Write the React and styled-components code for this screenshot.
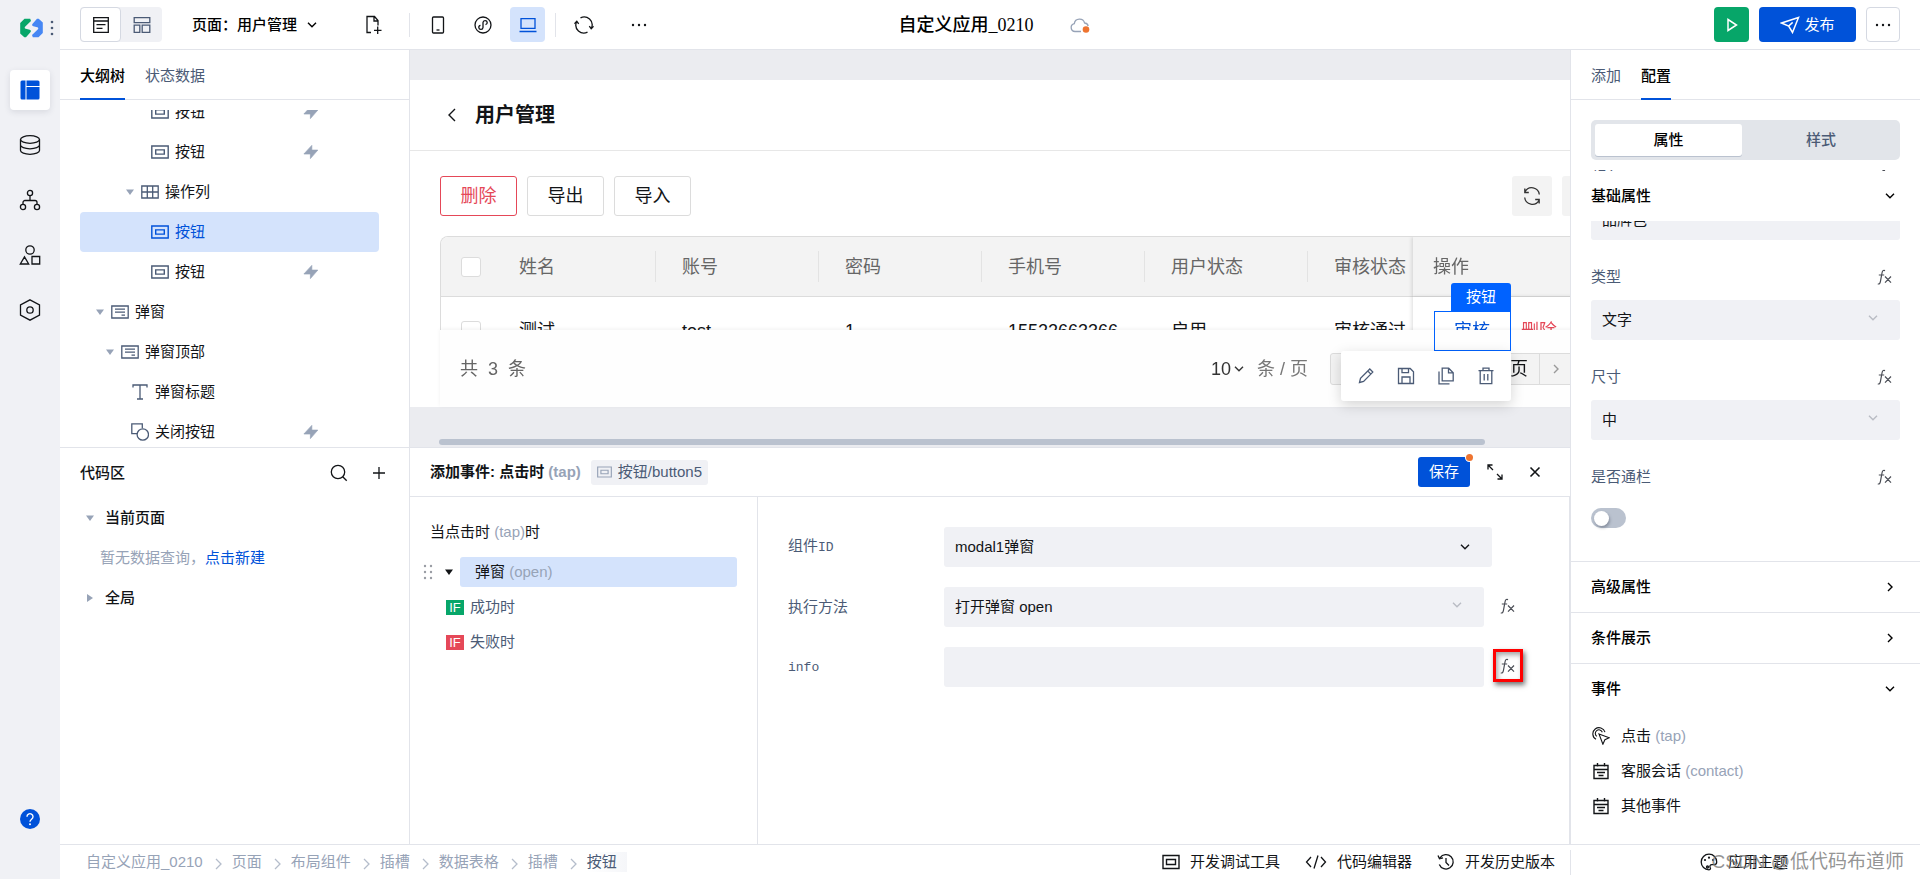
import React, { useLayoutEffect, useRef } from 'react';
import styled, { createGlobalStyle, css } from 'styled-components';

const c = {
  blue: '#0052d9',
  pale: '#d4e3fc',
  ink: '#121417',
  slate: '#4b5b76',
  mute: '#97a3b7',
  line: '#e2e4ea',
  fill: '#f0f1f5',
  red: '#e54858',
  green: '#07a669',
};

const Global = createGlobalStyle`
  *, *::before, *::after { box-sizing: border-box; }
  body {
    margin: 0;
    font: 15px/20px "Liberation Sans", "Noto Sans CJK SC", sans-serif;
    color: ${c.ink};
    background: #fff;
  }
  button, input, select { font: inherit; color: inherit; margin: 0; }
  button { border: 0; padding: 0; background: none; cursor: pointer; }
  h1, h2, h3, p, ul, ol { margin: 0; padding: 0; font: inherit; list-style: none; }
  a { color: inherit; text-decoration: none; }
  svg { display: block; flex: none; }
`;

/* ---------- icons ---------- */

const Icon = ({ w = 18, h = w, box, sw = 1.3, children, ...rest }) => (
  <svg
    width={w}
    height={h}
    viewBox={box || `0 0 ${w} ${h}`}
    fill="none"
    stroke="currentColor"
    strokeWidth={sw}
    aria-hidden="true"
    {...rest}
  >
    {children}
  </svg>
);

const leaf = 'M1.2 5L5.500.7h5.700L12 3 6.300 8.400c-1 1-.7 2 .5 2.300l3.900 1c1.300.4 1.600 1.500.7 2.500L7 19.300H5.300L1.200 15.500z';
const LogoIcon = () => (
  <Icon w={24} h={20} stroke="none">
    <path d={leaf} fill="#07a669" />
    <path d={leaf} fill="#4687f4" transform="rotate(180 12.500 10)" />
  </Icon>
);
const DotsV = () => (
  <Icon w={4} h={16} stroke="none">
    <g fill={c.slate}><circle cx="2" cy="2" r="1.300" /><circle cx="2" cy="8" r="1.300" /><circle cx="2" cy="14" r="1.300" /></g>
  </Icon>
);
const DotsH = () => (
  <Icon w={18} h={4} stroke="none">
    <g fill={c.ink}><circle cx="3" cy="2" r="1.200" /><circle cx="9" cy="2" r="1.200" /><circle cx="15" cy="2" r="1.200" /></g>
  </Icon>
);
const LayoutIcon = () => (
  <Icon w={20} stroke="none" fill="currentColor">
    <path d="M2 .5h3.500v19H2A1.500 1.500 0 0 1 .5 18V2A1.500 1.500 0 0 1 2 .5zM6.500.5H18A1.500 1.500 0 0 1 19.500 2v4h-13zM6.500 7h13v11a1.500 1.500 0 0 1-1.500 1.500H6.500z" />
  </Icon>
);
const DatabaseIcon = () => (
  <Icon w={22}>
    <ellipse cx="11" cy="5.500" rx="9.500" ry="3.800" />
    <path d="M1.500 5.500v11c0 2.100 4.200 3.800 9.500 3.800s9.500-1.700 9.500-3.800v-11M1.500 11c0 2.100 4.200 3.800 9.500 3.800s9.500-1.700 9.500-3.800" />
  </Icon>
);
const FlowIcon = () => (
  <Icon w={22}>
    <circle cx="11" cy="4" r="2.600" /><circle cx="4" cy="18" r="2.600" /><circle cx="18" cy="18" r="2.600" />
    <path d="M11 6.600v4.900M4 15.400v-1.900a2 2 0 0 1 2-2h10a2 2 0 0 1 2 2v1.900" />
  </Icon>
);
const ShapesIcon = () => (
  <Icon w={22}>
    <circle cx="11" cy="6" r="4.200" /><path d="M5.500 12.800L9.700 20H1.300zM13 12.500h7.700V20H13z" />
  </Icon>
);
const HexIcon = () => (
  <Icon w={22}>
    <path d="M11 .8l9.500 5v10.400l-9.500 5-9.500-5V5.800z" /><circle cx="11" cy="11" r="3.200" />
  </Icon>
);
const HelpIcon = () => (
  <Icon w={20} sw={1.400}>
    <circle cx="10" cy="10" r="10" fill={c.blue} stroke="none" />
    <path d="M7 7.700a3 3 0 1 1 4.600 2.500c-1 .7-1.600 1.200-1.600 2.500" stroke="#fff" />
    <circle cx="10" cy="15.200" r="1" fill="#fff" stroke="none" />
  </Icon>
);
const DocListIcon = () => (
  <Icon w={18}><path d="M1.700 1.700h14.600v14.600H1.700zM1.700 5h14.600M4.500 8.700h9M4.500 12.300h6" /></Icon>
);
const BlocksIcon = () => (
  <Icon w={18}><path d="M1.200 1.700h15.600v5H1.200zM1.200 9.200h5.600v7.100H1.200zM9.200 9.200h7.600v7.100H9.200z" /></Icon>
);
const FileAddIcon = () => (
  <Icon w={18} h={20}><path d="M6 17.500H2v-16h7.500l3.500 4v5M9 1.500V6h4M12.700 11.500v7.500M9 15.300h7.500" /></Icon>
);
const PhoneIcon = () => (
  <Icon w={18}><rect x="3.500" y="1" width="11" height="16" rx="1" /><path d="M7.500 14h3" /></Icon>
);
const MiniIcon = () => (
  <Icon w={18}>
    <circle cx="9" cy="9" r="8" />
    <path d="M9 11.500a2.100 2.100 0 1 1-2.500-2.200M9 11.500v-5a2.100 2.100 0 1 1 2.500 2.200" />
  </Icon>
);
const DesktopIcon = () => (
  <Icon w={18}><path d="M2 2.700h14v9.600H2zM.5 15.500h17" /></Icon>
);
const CycleIcon = () => (
  <Icon w={20}>
    <path d="M6.500 2.800A8 8 0 0 1 17.500 13M13.500 17.200A8 8 0 0 1 2.500 7" />
    <path d="M19.500 11.300l-2.300 2.400-1.900-2.600M.5 8.700l2.300-2.400 1.900 2.600" />
  </Icon>
);
const CloudIcon = () => (
  <Icon w={20} h={16} stroke={c.mute}>
    <path d="M11 14.500H5a4 4 0 0 1-.7-7.900A5.300 5.300 0 0 1 14.600 6a4 4 0 0 1 3.600 3" />
    <circle cx="16" cy="12.500" r="3.300" fill="#ee7430" stroke="none" />
  </Icon>
);
const PlayIcon = () => (
  <Icon w={14} h={16} sw={1.500}><path d="M3 2.500v11L11.500 8z" /></Icon>
);
const SendIcon = () => (
  <Icon w={20} h={18} sw={1.500}><path d="M1.500 7L18.500 1.500l-6 15L8.700 10zM8.700 10l4-3.600" /></Icon>
);
const ArrowDown = () => (
  <Icon w={10} h={6} sw={1.400}><path d="M1 .8l4 4 4-4" /></Icon>
);
const ArrowRight = () => (
  <Icon w={6} h={10} sw={1.400}><path d="M1 1l4 4-4 4" /></Icon>
);
const ArrowBack = () => (
  <Icon w={8} h={14} sw={1.400}><path d="M7 1L1 7l6 6" /></Icon>
);
const CrumbArrow = () => (
  <Icon w={8} h={12}><path d="M1 1l5 5-5 5" /></Icon>
);
const Caret = ({ right }) => (
  <Icon w={8} h={8} stroke="none" fill="currentColor">
    <path d={right ? 'M1 0l6 4-6 4z' : 'M0 1.500h8L4 7z'} />
  </Icon>
);
const BoltIcon = () => (
  <Icon w={16} h={14} stroke={c.mute} fill={c.mute} sw={0.700} strokeLinejoin="round">
    <path d="M8.800.4v4.700h6L7.400 13.600V9H.9z" />
  </Icon>
);
const ButtonIcon = ({ w = 18 }) => (
  <Icon w={w} h={14} box="0 0 18 14" sw={1.400}>
    <path d="M.8 1h16.400v12H.8z" /><path d="M4.700 4.900h8.600v4.200H4.700z" />
  </Icon>
);
const GridIcon = () => (
  <Icon w={18} h={14}><path d="M.8 1h16.400v12H.8zM.8 7h16.400M6.300 1v12M11.700 1v12" /></Icon>
);
const ModalIcon = () => (
  <Icon w={18} h={14}><path d="M.8 1h16.400v12H.8zM4 4.200h10M4 7.200h10M10.500 10.200H14" /></Icon>
);
const TextIcon = () => (
  <Icon w={18}><path d="M2 4.500V2h14v2.500M9 2v14M6 16h6" /></Icon>
);
const SlotIcon = () => (
  <Icon w={18}><path d="M6.500 10.700H.8V.8h10.500v4.500" /><circle cx="11.800" cy="11.500" r="5.700" /></Icon>
);
const SearchIcon = () => (
  <Icon w={18}><circle cx="8" cy="8" r="6.700" /><path d="M12.700 12.700l4 4" /></Icon>
);
const PlusIcon = () => <Icon w={14}><path d="M7 1v12M1 7h12" /></Icon>;
const ReloadIcon = () => (
  <Icon w={18}>
    <path d="M2 4.800A7.600 7.600 0 0 1 16.300 7.500M16 13.200A7.600 7.600 0 0 1 1.700 10.500M1.800 1.500v4h4M16.200 16.500v-4h-4" />
  </Icon>
);
const PencilIcon = () => (
  <Icon w={18}><path d="M2.500 15.500l1-4.200L12.800 2l3 3.100-9.200 9.300zM10.800 4l3.100 3.100" /></Icon>
);
const SaveIcon = () => (
  <Icon w={18}><path d="M1.500 1.500h11.700l3.300 3.300v11.700h-15zM5 1.500v4.200h6.500V1.500M5 16.500V10h8v6.500" /></Icon>
);
const CopyIcon = () => (
  <Icon w={18}><path d="M5.200 1.200h6.500l4.500 4.500v8.100h-11zM11.500 1.200v4.700h4.700M2 4.500v12.300h10.500" /></Icon>
);
const TrashIcon = () => (
  <Icon w={18}><path d="M1.500 3.700h15M6 3.500V1.200h6v2.300M3.200 3.700v13h11.600v-13M7.200 7v6.500M10.800 7v6.500" /></Icon>
);
const ExpandIcon = () => (
  <Icon w={16}><path d="M1 5.500V1h4.500M1 1l5 5M15 10.500V15h-4.500M15 15l-5-5" /></Icon>
);
const CloseIcon = () => <Icon w={12} sw={1.600}><path d="M1.500 1.500l9 9M10.500 1.500l-9 9" /></Icon>;
const DragIcon = () => (
  <Icon w={10} h={16} stroke="none" fill="#999ca3">
    {[2, 8, 14].map((y) => (
      <g key={y}><circle cx="2" cy={y} r="1.200" /><circle cx="8" cy={y} r="1.200" /></g>
    ))}
  </Icon>
);
const FxIcon = () => (
  <Icon w={16} stroke="#4a4d55" sw={1.200}>
    <path d="M8 1.600C6.300.7 5.400 1.700 5 4L3.400 12.600C3 14.600 2 15.400.8 14.800M1.800 6h5.400M8 7.500l6 6.200M14 7.500l-6 6.200" />
  </Icon>
);
const TapIcon = () => (
  <Icon w={18} sw={1.100}>
    <path d="M4.900 9.400A3.600 3.600 0 1 1 10.300 5.200M4 12.300A6.200 6.200 0 1 1 13 5.200" />
    <path d="M7 7l10.200 3.700-4.300 2-2 4.500z" />
  </Icon>
);
const EventIcon = () => (
  <Icon w={18} sw={1.400}><path d="M2 3.500h14v13H2zM2 7.500h14M5.500 1v3.500M12.500 1v3.500M5 10.500h8M6.500 13.500h5" /></Icon>
);
const CodeIcon = () => (
  <Icon w={22} h={16}><path d="M6 3L1.500 8 6 13M16 3l4.500 5-4.500 5M13 1.500l-4 13" /></Icon>
);
const HistoryIcon = () => (
  <Icon w={18}><path d="M3 4.800A7.200 7.200 0 1 1 2.300 11.500M1 2.500l1.500 3.300 3.500-1M9 5v4.500l3 3" /></Icon>
);
const DebugIcon = () => (
  <Icon w={18} h={16} sw={1.400}><path d="M1 1.500h16v13H1zM4.500 5.500h9v5h-9z" /></Icon>
);
const PaletteIcon = () => (
  <Icon w={18}>
    <path d="M9 1.200a7.700 7.700 0 1 0 0 15.600c1.500 0 1.800-1.200 1.200-2.200-.8-1.500 0-3 1.700-3h2.300c1.600 0 2.500-1.200 2.500-2.600C16.700 4.600 13.500 1.200 9 1.200z" />
    <g fill="currentColor" stroke="none"><circle cx="5" cy="7" r="1.100" /><circle cx="9" cy="4.700" r="1.100" /><circle cx="13" cy="7" r="1.100" /></g>
    <circle cx="7.500" cy="14" r="1" />
  </Icon>
);

/* ---------- shell ---------- */

const Shell = styled.div`
  display: grid;
  grid-template-columns: 60px minmax(0, 1fr);
  grid-template-rows: minmax(0, 1fr);
  height: 100vh;
`;
const Rail = styled.nav`
  display: flex;
  flex-direction: column;
  align-items: center;
  background: ${c.fill};
  padding-bottom: 50px;
`;
const Brand = styled.a`
  display: flex;
  align-items: center;
  justify-content: flex-end;
  gap: 7px;
  width: 100%;
  height: 55px;
  padding-right: 6px;
`;
const RailList = styled.div`
  display: flex;
  flex-direction: column;
  gap: 15px;
  margin-top: 15px;
  flex: 1;
`;
const RailButton = styled.button`
  display: grid;
  place-items: center;
  width: 40px;
  height: 40px;
  border-radius: 4px;
  ${(p) => p.$active && css`
    color: ${c.blue};
    background: #fff;
    box-shadow: 0 2px 6px rgba(40, 50, 70, 0.12);
  `}
`;
const Column = styled.div`
  display: grid;
  grid-template-rows: 50px minmax(0, 1fr) 35px;
  min-width: 0;
`;

/* ---------- top bar ---------- */

const TopBar = styled.header`
  display: grid;
  grid-template-columns: 1fr auto 1fr;
  align-items: center;
  padding: 0 20px;
  border-bottom: 1px solid ${c.line};
`;
const BarGroup = styled.div`
  display: flex;
  align-items: center;
  gap: 10px;
  justify-content: ${(p) => (p.$end ? 'flex-end' : 'flex-start')};
`;
const ViewSwitch = styled.div`
  display: flex;
  border-radius: 4px;
  background: ${c.fill};
`;
const ViewButton = styled.button`
  display: grid;
  place-items: center;
  width: 41px;
  height: 35px;
  border-radius: 4px;
  color: ${c.slate};
  ${(p) => p.$active && css`
    color: ${c.ink};
    background: #fff;
    border: 1px solid #d5d9e2;
  `}
`;
const PagePicker = styled.button`
  display: flex;
  align-items: center;
  gap: 10px;
  margin: 0 29px 0 20px;
  font-weight: 500;
  color: #000;
`;
const ToolButton = styled.button`
  display: grid;
  place-items: center;
  width: 35px;
  height: 35px;
  border-radius: 4px;
  ${(p) => p.$active && css`
    color: ${c.blue};
    background: ${c.pale};
  `}
`;
const BarRule = styled.span`
  width: 1px;
  height: 24px;
  margin-left: ${(p) => (p.$spaced ? 8 : 0)}px;
  background: ${c.line};
`;
const TrailingTools = styled.div`
  display: flex;
  gap: 20px;
`;
const AppTitle = styled.div`
  display: flex;
  align-items: center;
  gap: 36px;
  padding-left: 8px;
`;
const AppName = styled.h1`
  font: 500 18px/20px "Liberation Serif", "Noto Sans CJK SC", serif;
  color: #000;
`;
const RunButton = styled.button`
  display: grid;
  place-items: center;
  width: 35px;
  height: 35px;
  border-radius: 4px;
  color: #fff;
  background: ${c.green};
`;
const PublishButton = styled.button`
  display: flex;
  align-items: center;
  justify-content: center;
  gap: 4px;
  width: 97px;
  height: 35px;
  border-radius: 4px;
  color: #fff;
  background: ${c.blue};
`;
const MoreButton = styled.button`
  display: grid;
  place-items: center;
  width: 34px;
  height: 35px;
  border: 1px solid #d5d9e2;
  border-radius: 4px;
`;

/* ---------- workspace ---------- */

const Workspace = styled.div`
  display: grid;
  grid-template-columns: 350px minmax(0, 1fr) 350px;
  grid-template-rows: minmax(0, 1fr);
  min-height: 0;
`;
const SplitColumn = styled.div`
  display: grid;
  grid-template-rows: minmax(0, 1fr) minmax(0, 1fr);
  min-width: 0;
  min-height: 0;
  border-right: ${(p) => (p.$ruled ? `1px solid ${c.line}` : '0')};
`;
const Pane = styled.section`
  display: flex;
  flex-direction: column;
  min-height: 0;
  min-width: 0;
  background: #fff;
  border-top: ${(p) => (p.$lower ? `1px solid ${c.line}` : '0')};
`;
const Tabs = styled.div`
  display: flex;
  flex: none;
  gap: 20px;
  height: 50px;
  padding: 0 20px;
  border-bottom: 1px solid ${c.line};
`;
const Tab = styled.button`
  height: 50px;
  padding-top: 3px;
  color: ${(p) => (p.$active ? '#000' : c.slate)};
  font-weight: ${(p) => (p.$active ? 500 : 400)};
  border-bottom: 2px solid ${(p) => (p.$active ? c.blue : 'transparent')};
`;

/* ---------- outline tree ---------- */

const TreeScroll = styled.div`
  flex: 1;
  min-height: 0;
  margin-top: 10px;
  padding: 0 30px 0 20px;
  overflow-y: auto;
  scrollbar-width: none;
`;
const TreeRow = styled.li`
  display: flex;
  align-items: center;
  height: 40px;
  padding: 0 60px 0 ${(p) => 13 + p.$level * 10}px;
  border-radius: 4px;
  color: ${(p) => (p.$active ? c.blue : c.ink)};
  background: ${(p) => (p.$active ? c.pale : 'transparent')};
`;
const TreeCaret = styled.span`
  display: grid;
  place-items: center;
  width: 14px;
  margin-right: 4px;
  color: ${c.mute};
`;
const TreeIcon = styled.span`
  width: 18px;
  margin-right: 6px;
  color: ${(p) => (p.$active ? c.blue : c.slate)};
`;
const TreeLabel = styled.span`
  flex: 1;
`;

const tree = [
  [4, ButtonIcon, '按钮', { bolt: true }],
  [4, ButtonIcon, '按钮', { bolt: true }],
  [3, GridIcon, '操作列', { open: true }],
  [4, ButtonIcon, '按钮', { active: true }],
  [4, ButtonIcon, '按钮', { bolt: true }],
  [0, ModalIcon, '弹窗', { open: true }],
  [1, ModalIcon, '弹窗顶部', { open: true }],
  [2, TextIcon, '弹窗标题', {}],
  [2, SlotIcon, '关闭按钮', { bolt: true }],
];

function useScrolled(top) {
  const ref = useRef(null);
  useLayoutEffect(() => {
    ref.current.scrollTop = top;
  }, [top]);
  return ref;
}

function Outline() {
  const ref = useScrolled(18);
  return (
    <Pane>
      <Tabs>
        <Tab $active>大纲树</Tab>
        <Tab>状态数据</Tab>
      </Tabs>
      <TreeScroll ref={ref}>
        <ul>
          {tree.map(([level, Glyph, name, o], i) => (
            <TreeRow key={i} $level={level} $active={o.active}>
              <TreeCaret>{o.open && <Caret />}</TreeCaret>
              <TreeIcon $active={o.active}><Glyph /></TreeIcon>
              <TreeLabel>{name}</TreeLabel>
              {o.bolt && <BoltIcon />}
            </TreeRow>
          ))}
        </ul>
      </TreeScroll>
    </Pane>
  );
}

/* ---------- code area ---------- */

const CodeHead = styled.div`
  display: flex;
  align-items: center;
  gap: 24px;
  height: 50px;
  padding: 0 23px 0 20px;
  h2 { flex: 1; font-weight: 500; }
`;
const CodeRow = styled.div`
  display: flex;
  align-items: center;
  gap: 11px;
  height: 40px;
  padding-left: 26px;
  font-weight: 500;
  svg { color: ${c.mute}; }
`;
const CodeHint = styled.p`
  height: 40px;
  padding-left: 40px;
  line-height: 40px;
  color: ${c.mute};
  a { color: ${c.blue}; }
`;

function CodeArea() {
  return (
    <Pane $lower>
      <CodeHead>
        <h2>代码区</h2>
        <button aria-label="搜索"><SearchIcon /></button>
        <button aria-label="新建"><PlusIcon /></button>
      </CodeHead>
      <CodeRow><Caret />当前页面</CodeRow>
      <CodeHint>暂无数据查询，<a href="#new">点击新建</a></CodeHint>
      <CodeRow><Caret right />全局</CodeRow>
    </Pane>
  );
}

/* ---------- canvas ---------- */

const Canvas = styled.section`
  display: flex;
  flex-direction: column;
  min-width: 0;
  min-height: 0;
  padding-top: 30px;
  overflow: hidden;
  background: #ebecf0;
`;
const PageFrame = styled.div`
  position: relative;
  display: flex;
  flex: 1;
  flex-direction: column;
  min-height: 0;
  width: calc(100% + 126px);
  background: #fff;
`;
const PageHead = styled.div`
  display: flex;
  flex: none;
  align-items: center;
  gap: 19px;
  height: 71px;
  padding-left: 38px;
  border-bottom: 1px solid #e7e7e7;
  h2 { font-weight: 700; font-size: 20px; line-height: 28px; }
`;
const PageActions = styled.div`
  display: flex;
  flex: none;
  gap: 10px;
  padding: 25px 94px 20px 30px;
`;
const OutlineButton = styled.button`
  width: 77px;
  height: 40px;
  font-size: 18px;
  border: 1px solid ${(p) => (p.$danger ? c.red : '#dcdcdc')};
  border-radius: 3px;
  color: ${(p) => (p.$danger ? c.red : c.ink)};
  background: #fff;
`;
const SquareButton = styled.button`
  display: grid;
  place-items: center;
  width: 40px;
  height: 40px;
  border-radius: 3px;
  color: #333;
  background: #f3f3f3;
  ${(p) => p.$first && css`margin-left: auto;`}
`;
const TableClip = styled.div`
  flex: 1;
  min-height: 0;
  margin: 0 30px;
  border: 1px solid #dcdcdc;
  border-bottom: 0;
  border-radius: 8px 0 0 0;
  overflow: hidden;
`;
const DataTable = styled.table`
  table-layout: fixed;
  width: 1281px;
  border-collapse: separate;
  border-spacing: 0;
  font-size: 18px;
  line-height: 24px;
  th, td { padding: 0; text-align: left; font-weight: 400; white-space: nowrap; }
  th { height: 60px; color: #666; background: #f3f3f3; border-bottom: 1px solid #dcdcdc; }
  td { height: 68px; background: #fff; }
`;
const HeadCell = styled.div`
  height: 31px;
  padding-left: 26px;
  line-height: 32px;
  border-left: 1px solid ${(p) => (p.$first ? 'transparent' : '#e3e3e3')};
`;
const BodyCell = styled.div`
  padding-left: 27px;
`;
const CheckBox = styled.input`
  appearance: none;
  display: block;
  width: 20px;
  height: 20px;
  margin-left: 20px;
  border: 1px solid #dcdcdc;
  border-radius: 3px;
  background: #fff;
`;
const pinned = css`
  position: sticky;
  right: 0;
  box-shadow: -1px 0 4px rgba(0, 0, 0, 0.14);
`;
const PinnedHead = styled.th`
  ${pinned}
  && { padding-left: 20px; }
`;
const PinnedCell = styled.td`
  ${pinned}
  && { padding-left: 41px; }
`;
const CellAction = styled.button`
  margin-right: 31px;
  color: ${(p) => (p.$danger ? c.red : c.blue)};
`;
const Pagination = styled.div`
  position: relative;
  display: flex;
  flex: none;
  align-items: center;
  height: 77px;
  margin: 0 30px;
  padding: 0 60px 0 20px;
  font-size: 18px;
  line-height: 24px;
  background: #fefefe;
  box-shadow: 0 -1px 4px rgba(0, 0, 0, 0.06);
`;
const Total = styled.span`
  margin-right: auto;
  color: #666;
  white-space: pre;
`;
const SizeButton = styled.button`
  display: flex;
  align-items: center;
  gap: 3px;
  color: #333;
`;
const SizeUnit = styled.span`
  margin: 0 22px 0 13px;
  color: #777;
`;
const Pager = styled.div`
  display: flex;
  width: 276px;
  height: 32px;
  border: 1px solid #dcdcdc;
  border-radius: 3px;
  background: #f3f3f3;
`;
const PagerCurrent = styled.span`
  flex: 1;
  padding-right: 11px;
  text-align: right;
  line-height: 30px;
`;
const PagerButton = styled.button`
  display: grid;
  place-items: center;
  width: 33px;
  border-left: 1px solid #dcdcdc;
  color: #999;
`;
const Selection = styled.div`
  position: absolute;
  top: 203px;
  right: 185px;
  display: flex;
  flex-direction: column;
  align-items: flex-end;
  pointer-events: none;
`;
const SelectionTag = styled.span`
  width: 60px;
  height: 28px;
  border-radius: 3px 3px 0 0;
  text-align: center;
  line-height: 28px;
  color: #fff;
  background: #0062ff;
`;
const SelectionBox = styled.span`
  width: 77px;
  height: 40px;
  border: 1px solid #0062ff;
`;
const SelectionTools = styled.div`
  display: flex;
  align-items: center;
  justify-content: space-between;
  width: 170px;
  height: 50px;
  padding: 0 16px;
  border-radius: 3px;
  color: ${c.slate};
  background: #fff;
  box-shadow: 0 4px 14px rgba(0, 0, 0, 0.17);
`;
const ScrollTrack = styled.div`
  flex: none;
  height: 40px;
  padding: 32px 85px 0 29px;
`;
const ScrollThumb = styled.div`
  height: 6px;
  border-radius: 3px;
  background: #bac2cf;
`;

const columns = ['姓名', '账号', '密码', '手机号', '用户状态', '审核状态'];
const record = ['测试', 'test', '1', '15522663366', '启用', '审核通过'];

function CanvasPane() {
  return (
    <Canvas>
      <PageFrame>
        <PageHead>
          <button aria-label="返回"><ArrowBack /></button>
          <h2>用户管理</h2>
        </PageHead>
        <PageActions>
          <OutlineButton $danger>删除</OutlineButton>
          <OutlineButton>导出</OutlineButton>
          <OutlineButton>导入</OutlineButton>
          <SquareButton $first aria-label="刷新"><ReloadIcon /></SquareButton>
          <SquareButton aria-label="设置" />
        </PageActions>
        <TableClip>
          <DataTable>
            <colgroup>
              <col style={{ width: 51 }} />
              {columns.map((n) => <col key={n} style={{ width: 163 }} />)}
              <col style={{ width: 252 }} />
            </colgroup>
            <thead>
              <tr>
                <th><CheckBox type="checkbox" aria-label="全选" /></th>
                {columns.map((n, i) => (
                  <th key={n}><HeadCell $first={i === 0}>{n}</HeadCell></th>
                ))}
                <PinnedHead>操作</PinnedHead>
              </tr>
            </thead>
            <tbody>
              <tr>
                <td><CheckBox type="checkbox" aria-label="选择此行" /></td>
                {record.map((v, i) => <td key={i}><BodyCell>{v}</BodyCell></td>)}
                <PinnedCell>
                  <CellAction>审核</CellAction>
                  <CellAction $danger>删除</CellAction>
                </PinnedCell>
              </tr>
            </tbody>
          </DataTable>
        </TableClip>
        <Pagination>
          <Total>{'共  3  条'}</Total>
          <SizeButton>10<ArrowDown /></SizeButton>
          <SizeUnit>条 / 页</SizeUnit>
          <Pager>
            <PagerCurrent>页</PagerCurrent>
            <PagerButton aria-label="下一页"><ArrowRight /></PagerButton>
            <PagerButton aria-label="末页" />
          </Pager>
        </Pagination>
        <Selection>
          <SelectionTag>按钮</SelectionTag>
          <SelectionBox />
          <SelectionTools>
            <PencilIcon />
            <SaveIcon />
            <CopyIcon />
            <TrashIcon />
          </SelectionTools>
        </Selection>
      </PageFrame>
      <ScrollTrack><ScrollThumb /></ScrollTrack>
    </Canvas>
  );
}

/* ---------- event editor ---------- */

const EditorHead = styled.div`
  display: flex;
  flex: none;
  align-items: center;
  height: 49px;
  padding: 0 27px 0 20px;
  border-bottom: 1px solid ${c.line};
  h2 { font-weight: 700; }
`;
const Muted = styled.span`
  color: ${c.mute};
`;
const TargetTag = styled.span`
  display: flex;
  align-items: center;
  gap: 6px;
  height: 25px;
  margin: 0 auto 0 10px;
  padding: 0 6px;
  border-radius: 3px;
  color: ${c.slate};
  background: ${c.fill};
  svg { color: ${c.mute}; }
`;
const SaveButton = styled.button`
  position: relative;
  width: 52px;
  height: 30px;
  border-radius: 3px;
  color: #fff;
  background: ${c.blue};
  &::after {
    content: '';
    position: absolute;
    top: -3px;
    right: -3px;
    width: 7px;
    height: 7px;
    border-radius: 50%;
    background: #ee7430;
    box-shadow: 0 0 0 1px #fff;
  }
`;
const HeadIcon = styled.button`
  display: grid;
  place-items: center;
  width: 16px;
  margin-left: ${(p) => p.$gap}px;
`;
const EditorBody = styled.div`
  display: grid;
  flex: 1;
  grid-template-columns: 348px minmax(0, 1fr);
  min-height: 0;
`;
const Steps = styled.div`
  padding: 20px 20px 0 13px;
  border-right: 1px solid ${c.line};
`;
const StepTitle = styled.h3`
  height: 40px;
  padding: 5px 0 0 7px;
`;
const StepRow = styled.div`
  display: flex;
  align-items: center;
  height: 30px;
`;
const StepCaret = styled.span`
  margin: 0 7px 0 12px;
`;
const StepName = styled.button`
  flex: 1;
  height: 30px;
  padding-left: 15px;
  border-radius: 3px;
  text-align: left;
  background: ${c.pale};
`;
const Branch = styled.div`
  display: flex;
  align-items: center;
  gap: 6px;
  height: 35px;
  padding: 5px 0 0 23px;
  color: ${c.slate};
`;
const IfBadge = styled.span`
  width: 18px;
  height: 15px;
  font-size: 13px;
  line-height: 15px;
  text-align: center;
  color: #fff;
  background: ${(p) => p.$color};
`;
const Form = styled.form`
  display: flex;
  flex-direction: column;
  gap: 20px;
  padding: 30px 46px 0 30px;
  border-right: 1px solid ${c.line};
`;
const FormRow = styled.div`
  display: flex;
  align-items: center;
  gap: 9px;
  padding-right: ${(p) => (p.$plain ? 31 : 0)}px;
`;
const FormLabel = styled.label`
  flex: none;
  width: 147px;
  color: ${c.slate};
`;
const Latin = styled.span`
  font: 13px/20px "Liberation Mono", monospace;
`;
const SelectWrap = styled.div`
  position: relative;
  flex: 1;
  min-width: 0;
  color: ${(p) => (p.$dim ? '#b9bcc4' : c.ink)};
  > svg {
    position: absolute;
    top: ${(p) => (p.$dim ? 15 : 17)}px;
    right: 22px;
    pointer-events: none;
  }
`;
const control = css`
  display: block;
  width: 100%;
  min-width: 0;
  height: 40px;
  padding: 0 11px;
  border: 0;
  border-radius: 3px;
  color: ${c.ink};
  background: ${c.fill};
`;
const Select = styled.select`
  ${control}
  appearance: none;
`;
const TextInput = styled.input`
  ${control}
  flex: 1;
`;
const FxButton = styled.button`
  display: grid;
  flex: none;
  place-items: center;
  width: 30px;
  height: 33px;
  margin-bottom: 4px;
  padding-top: 2px;
  ${(p) => p.$marked && css`
    border: 3px solid #f00;
    box-shadow: 2px 3px 5px rgba(0, 0, 0, 0.55), inset 2px 3px 5px rgba(0, 0, 0, 0.35);
  `}
`;

function EventEditor() {
  return (
    <Pane $lower>
      <EditorHead>
        <h2>添加事件: 点击时 <Muted>(tap)</Muted></h2>
        <TargetTag><ButtonIcon w={15} />按钮/button5</TargetTag>
        <SaveButton>保存</SaveButton>
        <HeadIcon $gap={17} aria-label="展开"><ExpandIcon /></HeadIcon>
        <HeadIcon $gap={24} aria-label="关闭"><CloseIcon /></HeadIcon>
      </EditorHead>
      <EditorBody>
        <Steps>
          <StepTitle>当点击时 <Muted>(tap)</Muted>时</StepTitle>
          <StepRow>
            <DragIcon />
            <StepCaret><Caret /></StepCaret>
            <StepName>弹窗 <Muted>(open)</Muted></StepName>
          </StepRow>
          <Branch><IfBadge $color={c.green}>IF</IfBadge>成功时</Branch>
          <Branch><IfBadge $color={c.red}>IF</IfBadge>失败时</Branch>
        </Steps>
        <Form>
          <FormRow $plain>
            <FormLabel htmlFor="cid">组件<Latin>ID</Latin></FormLabel>
            <SelectWrap>
              <Select id="cid"><option>modal1弹窗</option></Select>
              <ArrowDown />
            </SelectWrap>
          </FormRow>
          <FormRow>
            <FormLabel htmlFor="method">执行方法</FormLabel>
            <SelectWrap $dim>
              <Select id="method"><option>打开弹窗 open</option></Select>
              <ArrowDown />
            </SelectWrap>
            <FxButton type="button" aria-label="表达式"><FxIcon /></FxButton>
          </FormRow>
          <FormRow>
            <FormLabel htmlFor="info"><Latin>info</Latin></FormLabel>
            <TextInput id="info" />
            <FxButton type="button" $marked aria-label="表达式"><FxIcon /></FxButton>
          </FormRow>
        </Form>
      </EditorBody>
    </Pane>
  );
}

/* ---------- property panel ---------- */

const Panel = styled.aside`
  display: flex;
  flex-direction: column;
  min-height: 0;
  border-left: 1px solid ${c.line};
`;
const Segments = styled.div`
  display: grid;
  flex: none;
  grid-template-columns: 147px minmax(0, 1fr);
  height: 40px;
  margin: 20px 20px 10px;
  padding: 4px 0 4px 4px;
  border-radius: 5px;
  background: #e2e5ea;
`;
const Segment = styled.button`
  border-radius: 3px;
  font-weight: 500;
  color: ${(p) => (p.$active ? '#000' : c.slate)};
  ${(p) => p.$active && css`
    background: #fff;
    box-shadow: 0 1px 0 #bac2cf;
  `}
`;
const PropScroll = styled.div`
  flex: 1;
  min-height: 0;
  padding: 0 20px;
  overflow-y: auto;
  scrollbar-width: none;
`;
const SectionHead = styled.button`
  display: flex;
  align-items: center;
  justify-content: space-between;
  width: 100%;
  height: 50px;
  padding-right: 5px;
  font-weight: 500;
  color: #000;
  background: #fff;
  svg { width: 10px; }
`;
const StickyHead = styled(SectionHead)`
  position: sticky;
  top: 1px;
  z-index: 1;
`;
const Field = styled.div`
  padding-top: 20px;
`;
const FieldHead = styled.div`
  display: flex;
  align-items: center;
  justify-content: space-between;
  height: 32px;
  margin-bottom: 8px;
  padding: 2px 7px 0 0;
  color: ${c.slate};
`;
const Toggle = styled.input`
  appearance: none;
  display: block;
  width: 35px;
  height: 20px;
  margin-bottom: 33px;
  border-radius: 10px;
  background: #bac2cf;
  &::before {
    content: '';
    display: block;
    width: 15px;
    height: 15px;
    margin: 3px;
    border-radius: 50%;
    background: #fff;
    box-shadow: 1px 2px 3px rgba(40, 50, 70, 0.35);
  }
`;
const ToggleLine = styled.div`
  padding-top: 8px;
`;
const Section = styled.section`
  flex: none;
  padding: 0 20px;
  border-top: 1px solid ${c.line};
`;
const EventList = styled.ul`
  padding: 4px 0 21px;
`;
const EventRow = styled.li`
  display: flex;
  align-items: center;
  gap: 11px;
  height: 35px;
  padding-left: 1px;
`;

function Choice({ id, label, value }) {
  return (
    <Field>
      <FieldHead><label htmlFor={id}>{label}</label><FxIcon /></FieldHead>
      <SelectWrap $dim>
        <Select id={id}><option>{value}</option></Select>
        <ArrowDown />
      </SelectWrap>
    </Field>
  );
}

function Properties() {
  const ref = useScrolled(80);
  return (
    <Panel>
      <Tabs>
        <Tab>添加</Tab>
        <Tab $active>配置</Tab>
      </Tabs>
      <Segments>
        <Segment $active>属性</Segment>
        <Segment>样式</Segment>
      </Segments>
      <PropScroll ref={ref}>
        <StickyHead>基础属性<ArrowDown /></StickyHead>
        <Choice id="color" label="颜色" value="品牌色" />
        <Choice id="type" label="类型" value="文字" />
        <Choice id="size" label="尺寸" value="中" />
        <Field>
          <FieldHead><label htmlFor="block">是否通栏</label><FxIcon /></FieldHead>
          <ToggleLine><Toggle id="block" type="checkbox" role="switch" /></ToggleLine>
        </Field>
      </PropScroll>
      <Section><SectionHead>高级属性<ArrowRight /></SectionHead></Section>
      <Section><SectionHead>条件展示<ArrowRight /></SectionHead></Section>
      <Section>
        <SectionHead>事件<ArrowDown /></SectionHead>
        <EventList>
          <EventRow><TapIcon /><span>点击 <Muted>(tap)</Muted></span></EventRow>
          <EventRow><EventIcon /><span>客服会话 <Muted>(contact)</Muted></span></EventRow>
          <EventRow><EventIcon />其他事件</EventRow>
        </EventList>
      </Section>
    </Panel>
  );
}

/* ---------- status bar ---------- */

const StatusBar = styled.footer`
  position: relative;
  display: grid;
  grid-template-columns: minmax(0, 1fr) auto 350px;
  align-items: center;
  border-top: 1px solid ${c.line};
`;
const Crumbs = styled.ol`
  display: flex;
  align-items: center;
  padding-left: 26px;
  color: ${c.mute};
  li { display: flex; align-items: center; }
  svg { margin: 3px 9px 0 12px; color: #b5bdcb; }
`;
const CurrentCrumb = styled.a`
  padding-right: 10px;
  color: ${c.slate};
  background: linear-gradient(90deg, #fff, #f5f6f9);
`;
const StatusTools = styled.div`
  display: flex;
  gap: 25px;
  padding-right: 15px;
`;
const StatusButton = styled.button`
  display: flex;
  align-items: center;
  gap: 10px;
`;
const ThemeCell = styled.div`
  display: flex;
  justify-content: flex-end;
  height: 25px;
  padding-right: 132px;
  border-left: 1px solid ${c.line};
`;
const Watermark = styled.span`
  position: absolute;
  right: 16px;
  bottom: 5px;
  font-size: 19px;
  line-height: 24px;
  color: rgba(120, 120, 120, 0.8);
  pointer-events: none;
`;

const crumbs = ['自定义应用_0210', '页面', '布局组件', '插槽', '数据表格', '插槽'];

function Status() {
  return (
    <StatusBar>
      <Crumbs>
        {crumbs.map((n, i) => (
          <li key={i}><a href="#node">{n}</a><CrumbArrow /></li>
        ))}
        <li><CurrentCrumb href="#node">按钮</CurrentCrumb></li>
      </Crumbs>
      <StatusTools>
        <StatusButton><DebugIcon />开发调试工具</StatusButton>
        <StatusButton><CodeIcon />代码编辑器</StatusButton>
        <StatusButton><HistoryIcon />开发历史版本</StatusButton>
      </StatusTools>
      <ThemeCell>
        <StatusButton><PaletteIcon />应用主题</StatusButton>
      </ThemeCell>
      <Watermark>CSDN @低代码布道师</Watermark>
    </StatusBar>
  );
}

export default function App() {
  return (
    <>
      <Global />
      <Shell>
        <Rail>
          <Brand href="#home" aria-label="首页"><LogoIcon /><DotsV /></Brand>
          <RailList>
            <RailButton $active aria-label="页面设计"><LayoutIcon /></RailButton>
            <RailButton aria-label="数据源"><DatabaseIcon /></RailButton>
            <RailButton aria-label="流程"><FlowIcon /></RailButton>
            <RailButton aria-label="素材"><ShapesIcon /></RailButton>
            <RailButton aria-label="设置"><HexIcon /></RailButton>
          </RailList>
          <button aria-label="帮助"><HelpIcon /></button>
        </Rail>
        <Column>
          <TopBar>
            <BarGroup>
              <ViewSwitch>
                <ViewButton $active aria-label="页面视图"><DocListIcon /></ViewButton>
                <ViewButton aria-label="布局视图"><BlocksIcon /></ViewButton>
              </ViewSwitch>
              <PagePicker><span>页面：用户管理</span><ArrowDown /></PagePicker>
              <ToolButton aria-label="新建页面"><FileAddIcon /></ToolButton>
              <BarRule $spaced />
              <ToolButton aria-label="手机"><PhoneIcon /></ToolButton>
              <ToolButton aria-label="小程序"><MiniIcon /></ToolButton>
              <ToolButton $active aria-label="桌面"><DesktopIcon /></ToolButton>
              <BarRule />
              <TrailingTools>
                <ToolButton aria-label="刷新"><CycleIcon /></ToolButton>
                <ToolButton aria-label="更多"><DotsH /></ToolButton>
              </TrailingTools>
            </BarGroup>
            <AppTitle>
              <AppName>自定义应用_0210</AppName>
              <CloudIcon />
            </AppTitle>
            <BarGroup $end>
              <RunButton aria-label="预览"><PlayIcon /></RunButton>
              <PublishButton><SendIcon />发布</PublishButton>
              <MoreButton aria-label="更多操作"><DotsH /></MoreButton>
            </BarGroup>
          </TopBar>
          <Workspace>
            <SplitColumn $ruled>
              <Outline />
              <CodeArea />
            </SplitColumn>
            <SplitColumn>
              <CanvasPane />
              <EventEditor />
            </SplitColumn>
            <Properties />
          </Workspace>
          <Status />
        </Column>
      </Shell>
    </>
  );
}
